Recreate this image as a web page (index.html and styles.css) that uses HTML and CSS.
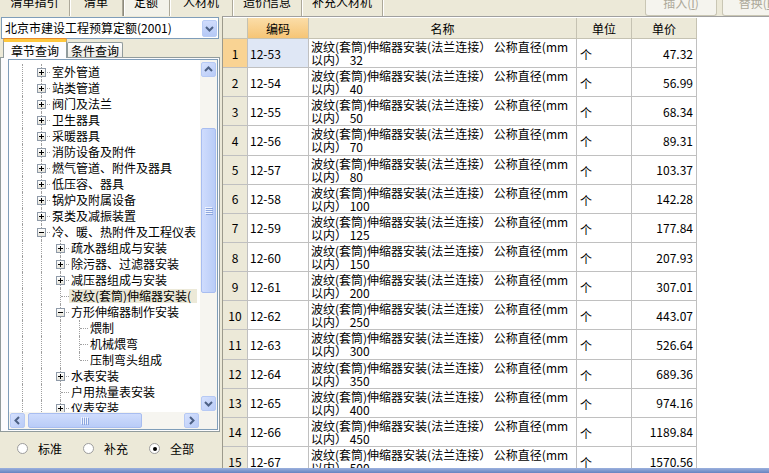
FILE: index.html
```html
<!DOCTYPE html>
<html lang="zh-CN">
<head>
<meta charset="utf-8">
<title>定额</title>
<link rel="stylesheet" href="styles.css">
</head>
<body>
<div class="app">
  <div class="topbar">
    <div class="ttabs">
      <div class="ttab w1"><span>清单指引</span></div>
      <div class="ttab w2"><span>清单</span></div>
      <div class="ttab w3 on"><span>定额</span></div>
      <div class="ttab w4"><span>人材机</span></div>
      <div class="ttab w5"><span>造价信息</span></div>
      <div class="ttab w6"><span>补充人材机</span></div>
    </div>
    <div class="tbtns">
      <div class="tbtn"><span>插入(<u>I</u>)</span></div>
      <div class="tbtn"><span>替换(<u>F</u>)</span></div>
    </div>
  </div>

  <div class="main">
    <div class="left">
      <div class="combo">
        <span class="combo-text">北京市建设工程预算定额(2001)</span>
        <span class="dd"><svg width="15" height="17" viewBox="0 0 15 17"><path d="M4 7 L7.5 10.5 L11 7" stroke="#4d6185" stroke-width="2" fill="none"/></svg></span>
      </div>
      <div class="tabrow">
        <div class="tab on">章节查询</div>
        <div class="tab">条件查询</div>
      </div>
      <div class="pane">
        <div class="tree">
          <div class="tree-body">
            <div class="tr"><b class="g v"></b><b class="n"><i class="bx p"></i></b><span class="tx">室外管道</span></div>
            <div class="tr"><b class="g v"></b><b class="n"><i class="bx p"></i></b><span class="tx">站类管道</span></div>
            <div class="tr"><b class="g v"></b><b class="n"><i class="bx p"></i></b><span class="tx">阀门及法兰</span></div>
            <div class="tr"><b class="g v"></b><b class="n"><i class="bx p"></i></b><span class="tx">卫生器具</span></div>
            <div class="tr"><b class="g v"></b><b class="n"><i class="bx p"></i></b><span class="tx">采暖器具</span></div>
            <div class="tr"><b class="g v"></b><b class="n"><i class="bx p"></i></b><span class="tx">消防设备及附件</span></div>
            <div class="tr"><b class="g v"></b><b class="n"><i class="bx p"></i></b><span class="tx">燃气管道、附件及器具</span></div>
            <div class="tr"><b class="g v"></b><b class="n"><i class="bx p"></i></b><span class="tx">低压容、器具</span></div>
            <div class="tr"><b class="g v"></b><b class="n"><i class="bx p"></i></b><span class="tx">锅炉及附属设备</span></div>
            <div class="tr"><b class="g v"></b><b class="n"><i class="bx p"></i></b><span class="tx">泵类及减振装置</span></div>
            <div class="tr"><b class="g v"></b><b class="n"><i class="bx m"></i></b><span class="tx">冷、暖、热附件及工程仪表</span></div>
            <div class="tr"><b class="g v"></b><b class="g v"></b><b class="n"><i class="bx p"></i></b><span class="tx">疏水器组成与安装</span></div>
            <div class="tr"><b class="g v"></b><b class="g v"></b><b class="n"><i class="bx p"></i></b><span class="tx">除污器、过滤器安装</span></div>
            <div class="tr"><b class="g v"></b><b class="g v"></b><b class="n"><i class="bx p"></i></b><span class="tx">减压器组成与安装</span></div>
            <div class="tr"><b class="g v"></b><b class="g v"></b><b class="n"></b><span class="tx sel">波纹(套筒)伸缩器安装(</span></div>
            <div class="tr"><b class="g v"></b><b class="g v"></b><b class="n"><i class="bx m"></i></b><span class="tx">方形伸缩器制作安装</span></div>
            <div class="tr"><b class="g v"></b><b class="g v"></b><b class="g v"></b><b class="n"></b><span class="tx">煨制</span></div>
            <div class="tr"><b class="g v"></b><b class="g v"></b><b class="g v"></b><b class="n"></b><span class="tx">机械煨弯</span></div>
            <div class="tr"><b class="g v"></b><b class="g v"></b><b class="g v"></b><b class="n last"></b><span class="tx">压制弯头组成</span></div>
            <div class="tr"><b class="g v"></b><b class="g v"></b><b class="n"><i class="bx p"></i></b><span class="tx">水表安装</span></div>
            <div class="tr"><b class="g v"></b><b class="g v"></b><b class="n"></b><span class="tx">户用热量表安装</span></div>
            <div class="tr"><b class="g v"></b><b class="g v"></b><b class="n"><i class="bx p"></i></b><span class="tx">仪表安装</span></div>
          </div>
          <div class="vs">
            <div class="arw"><svg width="15" height="15" viewBox="0 0 15 15"><path d="M4 9 L7.5 5.5 L11 9" stroke="#4d6185" stroke-width="2" fill="none"/></svg></div>
            <div class="vgap"></div>
            <div class="vthumb"><svg width="8" height="8" viewBox="0 0 8 8"><path d="M0 .5H7M0 2.5H7M0 4.5H7M0 6.5H7" stroke="#eef3fe" stroke-width="1"/><path d="M1 1.5H8M1 3.5H8M1 5.5H8M1 7.5H8" stroke="#8da6de" stroke-width="1"/></svg></div>
            <div class="fill"></div>
            <div class="arw"><svg width="15" height="15" viewBox="0 0 15 15"><path d="M4 6 L7.5 9.5 L11 6" stroke="#4d6185" stroke-width="2" fill="none"/></svg></div>
          </div>
          <div class="hs">
            <div class="arw"><svg width="15" height="15" viewBox="0 0 15 15"><path d="M9 4 L5.5 7.5 L9 11" stroke="#4d6185" stroke-width="2" fill="none"/></svg></div>
            <div class="hgap"></div>
            <div class="hthumb"><svg width="8" height="8" viewBox="0 0 8 8"><path d="M.5 0V7M2.5 0V7M4.5 0V7M6.5 0V7" stroke="#eef3fe" stroke-width="1"/><path d="M1.5 1V8M3.5 1V8M5.5 1V8M7.5 1V8" stroke="#8da6de" stroke-width="1"/></svg></div>
            <div class="fill"></div>
            <div class="arw"><svg width="15" height="15" viewBox="0 0 15 15"><path d="M6 4 L9.5 7.5 L6 11" stroke="#4d6185" stroke-width="2" fill="none"/></svg></div>
          </div>
          <div class="corner"></div>
        </div>
      </div>
      <div class="radios">
        <span class="rb"></span><span class="rl">标准</span>
        <span class="rb"></span><span class="rl">补充</span>
        <span class="rb on"></span><span class="rl">全部</span>
      </div>
    </div>

    <div class="right">
      <div class="grid">
        <div class="c h"></div>
        <div class="c h cur">编码</div>
        <div class="c h">名称</div>
        <div class="c h">单位</div>
        <div class="c h">单价</div>

        <div class="c rn cur">1</div><div class="c cd sel">12-53</div><div class="c nm"><span>波纹(套筒)伸缩器安装(法兰连接） 公称直径(mm<br>以内） 32</span></div><div class="c un">个</div><div class="c pr">47.32</div>
        <div class="c rn">2</div><div class="c cd">12-54</div><div class="c nm"><span>波纹(套筒)伸缩器安装(法兰连接） 公称直径(mm<br>以内） 40</span></div><div class="c un">个</div><div class="c pr">56.99</div>
        <div class="c rn">3</div><div class="c cd">12-55</div><div class="c nm"><span>波纹(套筒)伸缩器安装(法兰连接） 公称直径(mm<br>以内） 50</span></div><div class="c un">个</div><div class="c pr">68.34</div>
        <div class="c rn">4</div><div class="c cd">12-56</div><div class="c nm"><span>波纹(套筒)伸缩器安装(法兰连接） 公称直径(mm<br>以内） 70</span></div><div class="c un">个</div><div class="c pr">89.31</div>
        <div class="c rn">5</div><div class="c cd">12-57</div><div class="c nm"><span>波纹(套筒)伸缩器安装(法兰连接） 公称直径(mm<br>以内） 80</span></div><div class="c un">个</div><div class="c pr">103.37</div>
        <div class="c rn">6</div><div class="c cd">12-58</div><div class="c nm"><span>波纹(套筒)伸缩器安装(法兰连接） 公称直径(mm<br>以内） 100</span></div><div class="c un">个</div><div class="c pr">142.28</div>
        <div class="c rn">7</div><div class="c cd">12-59</div><div class="c nm"><span>波纹(套筒)伸缩器安装(法兰连接） 公称直径(mm<br>以内） 125</span></div><div class="c un">个</div><div class="c pr">177.84</div>
        <div class="c rn">8</div><div class="c cd">12-60</div><div class="c nm"><span>波纹(套筒)伸缩器安装(法兰连接） 公称直径(mm<br>以内） 150</span></div><div class="c un">个</div><div class="c pr">207.93</div>
        <div class="c rn">9</div><div class="c cd">12-61</div><div class="c nm"><span>波纹(套筒)伸缩器安装(法兰连接） 公称直径(mm<br>以内） 200</span></div><div class="c un">个</div><div class="c pr">307.01</div>
        <div class="c rn">10</div><div class="c cd">12-62</div><div class="c nm"><span>波纹(套筒)伸缩器安装(法兰连接） 公称直径(mm<br>以内） 250</span></div><div class="c un">个</div><div class="c pr">443.07</div>
        <div class="c rn">11</div><div class="c cd">12-63</div><div class="c nm"><span>波纹(套筒)伸缩器安装(法兰连接） 公称直径(mm<br>以内） 300</span></div><div class="c un">个</div><div class="c pr">526.64</div>
        <div class="c rn">12</div><div class="c cd">12-64</div><div class="c nm"><span>波纹(套筒)伸缩器安装(法兰连接） 公称直径(mm<br>以内） 350</span></div><div class="c un">个</div><div class="c pr">689.36</div>
        <div class="c rn">13</div><div class="c cd">12-65</div><div class="c nm"><span>波纹(套筒)伸缩器安装(法兰连接） 公称直径(mm<br>以内） 400</span></div><div class="c un">个</div><div class="c pr">974.16</div>
        <div class="c rn">14</div><div class="c cd">12-66</div><div class="c nm"><span>波纹(套筒)伸缩器安装(法兰连接） 公称直径(mm<br>以内） 450</span></div><div class="c un">个</div><div class="c pr">1189.84</div>
        <div class="c rn">15</div><div class="c cd">12-67</div><div class="c nm"><span>波纹(套筒)伸缩器安装(法兰连接） 公称直径(mm<br>以内） 500</span></div><div class="c un">个</div><div class="c pr">1570.56</div>
      </div>
    </div>
  </div>
  <div class="status"></div>
</div>
</body>
</html>
```

FILE: styles.css
```css
* { box-sizing: border-box; }
html, body { margin: 0; padding: 0; }
body {
  width: 769px;
  height: 473px;
  overflow: hidden;
  background: #ece9d8;
  font-family: "Noto Sans CJK SC", "Noto Sans", sans-serif;
  font-size: 12px;
  color: #000;
}
.app { display: flex; flex-direction: column; height: 473px; }

/* top bar */
.topbar { height: 16px; display: flex; overflow: hidden; flex: none; }
.ttabs { display: flex; flex: none; }
.ttab {
  height: 16px;
  display: flex;
  justify-content: center;
  align-items: flex-start;
  border-right: 1px solid #aca899;
  box-shadow: 1px 0 0 #fff;
}
.ttab span { line-height: 12px; margin-top: -4px; white-space: nowrap; }
.ttab.w1 { width: 70px; }
.ttab.w2 { width: 53px; }
.ttab.w3 { width: 47px; }
.ttab.w4 { width: 63px; }
.ttab.w5 { width: 69px; }
.ttab.w6 { width: 81px; }
.ttab.on { background: #f3f2ea; box-shadow: inset 1px 0 0 #8d8a7c, inset 2px 0 0 #fff, 1px 0 0 #fff; }
.tbtns { display: flex; gap: 5px; margin-left: 262px; flex: none; }
.tbtn {
  width: 72px;
  height: 16px;
  border: 1px solid #c9c6b4;
  border-top: none;
  border-radius: 0 0 3px 3px;
  background: #f5f4ee;
  color: #aca899;
  display: flex;
  justify-content: center;
  align-items: flex-start;
}
.tbtn span { line-height: 12px; margin-top: -3px; white-space: nowrap; }

/* main */
.main { height: 452px; display: flex; flex: none; }
.left { width: 220px; display: flex; flex-direction: column; flex: none; }

.combo {
  margin: 1px 0 0 1px;
  width: 218px;
  height: 22px;
  border: 1px solid #7f9db9;
  background: #fff;
  display: flex;
  align-items: center;
  flex: none;
}
.combo-text { padding-left: 3px; white-space: nowrap; line-height: 14px; }
.dd {
  margin-left: auto;
  margin-right: 1px;
  width: 15px;
  height: 17px;
  border: 1px solid #b9ccf5;
  border-radius: 2px;
  background: linear-gradient(#d0dcfc, #b5c9f6);
  display: flex;
  align-items: center;
  justify-content: center;
}
.dd svg { display: block; margin: -1px; }

.tabrow { height: 18px; display: flex; align-items: flex-end; padding-left: 3px; flex: none; }
.tab {
  height: 15px;
  width: 56px;
  border: 1px solid #919b9c;
  border-bottom: none;
  border-radius: 2px 2px 0 0;
  background: linear-gradient(#fefefe, #ecebe5);
  display: flex;
  justify-content: center;
  align-items: center;
  line-height: 13px;
  white-space: nowrap;
}
.tab.on {
  width: 64px;
  height: 19px;
  margin-bottom: -1px;
  position: relative;
  z-index: 1;
  background: #fcfcfe;
  border-top: 3px solid #ffc83c;
  box-shadow: 0 -1px 0 #e68b2c;
  padding-top: 1px;
}

.pane {
  height: 375px;
  width: 220px;
  border: 1px solid #919b9c;
  background: #fcfcfe;
  padding: 1px 1px 1px 7px;
  flex: none;
}
.tree {
  width: 210px;
  height: 371px;
  border: 1px solid #7f9db9;
  background: #fff;
  display: grid;
  grid-template-columns: 191px 17px;
  grid-template-rows: 352px 17px;
}
.tree-body { overflow: hidden; padding-top: 4px; }
.tr { display: flex; height: 16px; align-items: center; white-space: nowrap; }
.g, .n { display: block; height: 16px; position: relative; flex: none; }
.g { width: 19px; }
.n { width: 24px; }
.g.v::before, .n::before {
  content: "";
  position: absolute;
  left: 13px;
  top: 0;
  bottom: 0;
  border-left: 1px dotted #a0a0a0;
}
.n.last::before { bottom: 8px; }
.n::after {
  content: "";
  position: absolute;
  left: 14px;
  right: 2px;
  top: 8px;
  border-top: 1px dotted #a0a0a0;
}
.bx {
  position: absolute;
  left: 9px;
  top: 4px;
  width: 9px;
  height: 9px;
  border: 1px solid #8f9aa8;
  background: linear-gradient(#fff, #e6e4da);
  z-index: 1;
}
.bx.p {
  background:
    linear-gradient(#000, #000) 1px 3px / 5px 1px no-repeat,
    linear-gradient(#000, #000) 3px 1px / 1px 5px no-repeat,
    linear-gradient(#fff, #e6e4da);
}
.bx.m {
  background:
    linear-gradient(#000, #000) 1px 3px / 5px 1px no-repeat,
    linear-gradient(#fff, #e6e4da);
}
.tx { line-height: 14px; padding: 0 2px; margin-left: -2px; }
.tx.sel { background: #ece9d8; padding-right: 6px; }

.vs, .hs { display: flex; background: #f6f5f0; }
.vs { flex-direction: column; padding: 2px 1px 1px 1px; }
.hs { flex-direction: row; padding: 1px 1px 1px 1px; }
.arw {
  width: 15px;
  height: 15px;
  flex: none;
  border: 1px solid #b6c9f4;
  border-radius: 2px;
  background: linear-gradient(135deg, #d6e1fd, #b8cbf7);
  display: flex;
  align-items: center;
  justify-content: center;
}
.arw svg { display: block; margin: -1px; }
.vgap { height: 51px; flex: none; }
.hgap { width: 3px; flex: none; }
.fill { flex: 1; }
.vthumb, .hthumb {
  flex: none;
  border: 1px solid #a8bdf0;
  border-radius: 2px;
  display: flex;
  align-items: center;
  justify-content: center;
}
.vthumb { height: 165px; background: linear-gradient(to right, #cfdcfd, #b9ccf7); }
.hthumb { width: 114px; background: linear-gradient(#cfdcfd, #b9ccf7); }
.corner { background: #f4f3ee; }

.radios {
  flex: 1;
  display: flex;
  align-items: center;
  padding: 0 0 3px 17px;
}
.rb {
  width: 11px;
  height: 11px;
  border: 1px solid #9d9d9d;
  border-radius: 50%;
  background: #fff;
  display: flex;
  align-items: center;
  justify-content: center;
  flex: none;
}
.rb.on::after { content: ""; width: 4px; height: 4px; border-radius: 50%; background: #000; }
.rl { margin-left: 10px; margin-right: 21px; line-height: 14px; }

/* right table */
.right {
  flex: 1;
  margin-left: 2px;
  background: #fff;
  border-left: 1px solid #9c9a8c;
  border-top: 1px solid #a0a0a0;
  overflow: hidden;
}
.grid {
  margin-top: 1px;
  display: grid;
  grid-template-columns: 25px 61px 268px 55px 65px;
  grid-template-rows: 21px;
  grid-auto-rows: 29.15px;
  width: 474px;
}
.c {
  border-right: 1px solid #c0c0c0;
  border-bottom: 1px solid #c0c0c0;
  display: flex;
  align-items: center;
  overflow: hidden;
  white-space: nowrap;
}
.h { background: #ece9d8; justify-content: center; border-color: #c5c2b2; }
.h.cur { background: linear-gradient(#fbdda8, #f6c576); }
.rn { background: #ece9d8; justify-content: center; }
.rn.cur { background: #f9d393; }
.cd { padding-left: 2px; }
.cd.sel { background: #dfe7f5; }
.nm { padding-left: 2px; }
.nm span { line-height: 13px; }
.un { padding-left: 3px; padding-top: 3px; }
.pr { justify-content: flex-end; padding-right: 3px; }

.status { flex: 1; background: linear-gradient(#9bb1de, #6883c0); }
```
